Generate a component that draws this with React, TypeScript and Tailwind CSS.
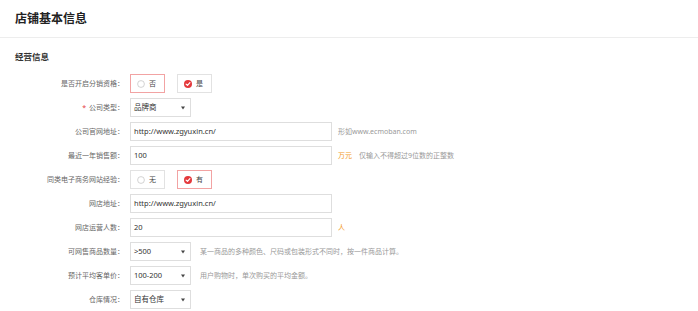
import React from "react";

function Row({ label, required, children }: { label: string; required?: boolean; children: React.ReactNode }) {
  return (
    <div className="flex h-[19px] items-center">
      <div className="w-[109px] text-right text-[7px] leading-none text-[#666]">
        {required && <span className="mr-[3px] text-[#e4393c]">*</span>}
        {label}：
      </div>
      <div className="ml-[6px] flex h-full items-center">{children}</div>
    </div>
  );
}

function Radio({ label, checked, active }: { label: string; checked?: boolean; active?: boolean }) {
  return (
    <div
      className={
        "flex h-[19px] w-[35px] items-center border pl-[6px] " +
        (active ? "border-[#f2a3a3]" : "border-[#e2e2e2]")
      }
    >
      {checked ? (
        <svg width="8" height="8" viewBox="0 0 8 8">
          <circle cx="4" cy="4" r="4" fill="#e4393c" />
          <path d="M2.1 4.1 L3.5 5.4 L5.9 2.7" stroke="#fff" strokeWidth="1.2" fill="none" strokeLinecap="round" strokeLinejoin="round" />
        </svg>
      ) : (
        <svg width="8" height="8" viewBox="0 0 8 8">
          <circle cx="4" cy="4" r="3.4" fill="#fff" stroke="#c8c8c8" strokeWidth="0.8" />
        </svg>
      )}
      <span className="ml-[4px] text-[7px] leading-none text-[#444]">{label}</span>
    </div>
  );
}

function Input({ value }: { value: string }) {
  return (
    <div className="flex h-[19px] w-[202px] items-center border border-[#dedede] px-[3px] text-[7.5px] leading-none text-[#333]">
      {value}
    </div>
  );
}

function Select({ value }: { value: string }) {
  return (
    <div className="flex h-[19px] w-[61px] items-center justify-between border border-[#dedede] pl-[3px] pr-[5px] text-[7.5px] leading-none text-[#333]">
      <span>{value}</span>
      <svg width="4" height="4" viewBox="0 0 4 4">
        <path d="M0 0.5 L4 0.5 L2 3.5 Z" fill="#444" />
      </svg>
    </div>
  );
}

function Hint({ children, gap = "ml-[6px]" }: { children: React.ReactNode; gap?: string }) {
  return <span className={gap + " text-[7px] leading-none text-[#999]"}>{children}</span>;
}

function Unit({ children }: { children: React.ReactNode }) {
  return <span className="ml-[6px] text-[7px] leading-none text-[#f39a1e]">{children}</span>;
}

export default function App() {
  return (
    <div className="h-[311px] w-[698px] overflow-hidden bg-white font-['Noto_Sans','Noto_Sans_CJK_SC',sans-serif]">
      <div className="flex h-[38px] items-center border-b border-[#ededed] px-[15px]">
        <h1 className="text-[12px] font-bold leading-none text-[#222]">店铺基本信息</h1>
      </div>
      <div className="px-[15px]">
        <div className="mt-[13px] text-[8.5px] font-semibold leading-[12px] text-[#333]">经营信息</div>
        <div className="mt-[11px] flex flex-col gap-[5px]">
          <Row label="是否开启分销资格">
            <Radio label="否" active />
            <div className="ml-[12px]">
              <Radio label="是" checked />
            </div>
          </Row>
          <Row label="公司类型" required>
            <Select value="品牌商" />
          </Row>
          <Row label="公司官网地址">
            <Input value="http://www.zgyuxin.cn/" />
            <Hint>形如www.ecmoban.com</Hint>
          </Row>
          <Row label="最近一年销售额">
            <Input value="100" />
            <Unit>万元</Unit>
            <Hint gap="ml-[7px]">仅输入不得超过9位数的正整数</Hint>
          </Row>
          <Row label="同类电子商务网站经验">
            <Radio label="无" />
            <div className="ml-[12px]">
              <Radio label="有" checked active />
            </div>
          </Row>
          <Row label="网店地址">
            <Input value="http://www.zgyuxin.cn/" />
          </Row>
          <Row label="网店运营人数">
            <Input value="20" />
            <Unit>人</Unit>
          </Row>
          <Row label="可网售商品数量">
            <Select value=">500" />
            <Hint gap="ml-[9px]">某一商品的多种颜色、尺码或包装形式不同时，按一件商品计算。</Hint>
          </Row>
          <Row label="预计平均客单价">
            <Select value="100-200" />
            <Hint gap="ml-[9px]">用户购物时，单次购买的平均金额。</Hint>
          </Row>
          <Row label="仓库情况">
            <Select value="自有仓库" />
          </Row>
        </div>
      </div>
    </div>
  );
}
